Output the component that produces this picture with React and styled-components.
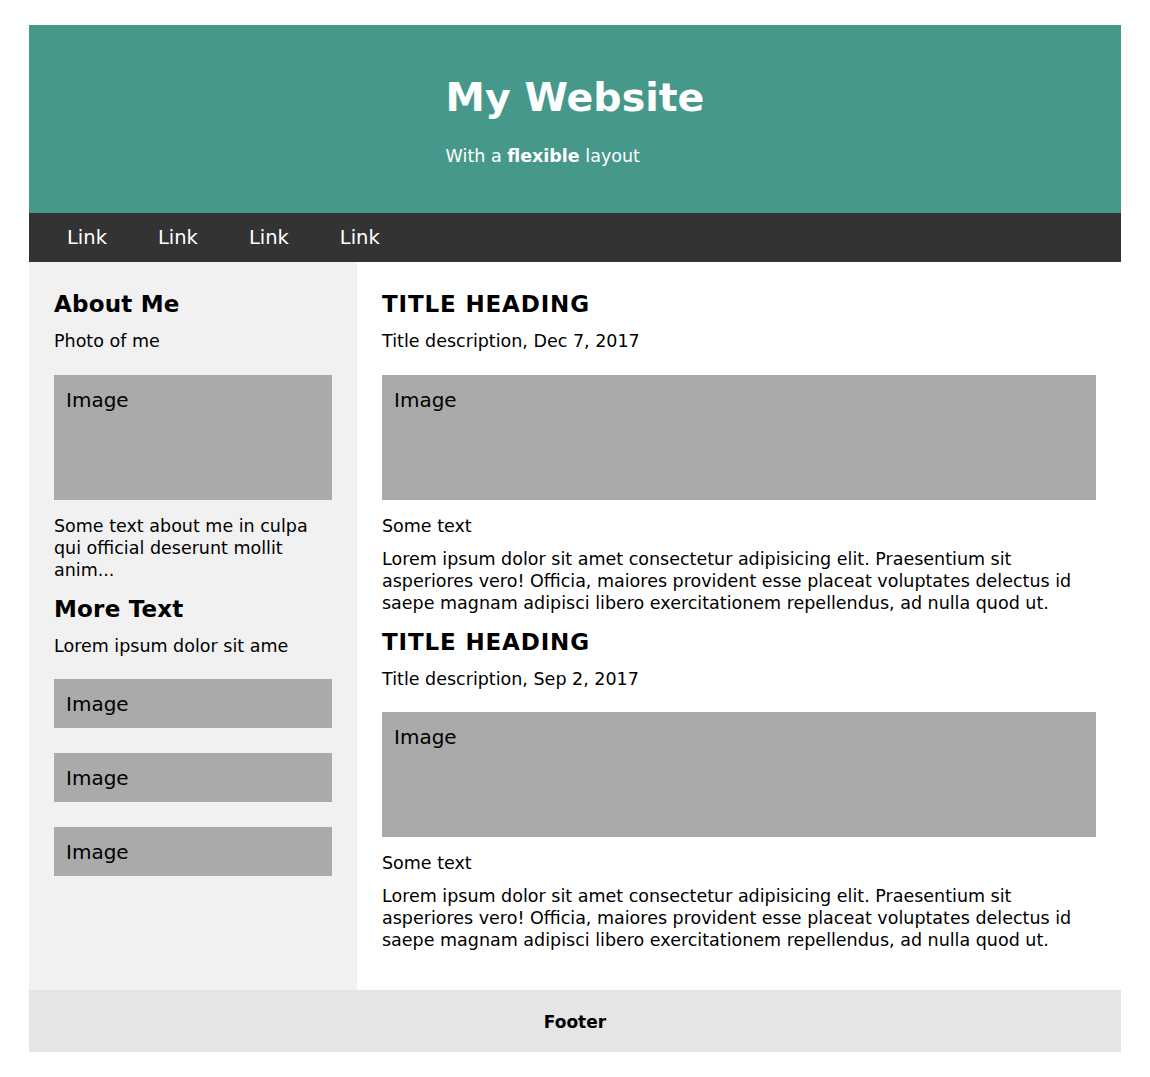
import React from "react";
import styled, { createGlobalStyle } from "styled-components";

const Global = createGlobalStyle`
  html, body { margin: 0; padding: 0; background: #fff; }
  body {
    font-family: "DejaVu Sans", Verdana, sans-serif;
    font-size: 17.5px;
    line-height: 22px;
    color: #000;
  }
`;

const Page = styled.div`
  width: 1092px;
  margin: 25px auto 26px;
`;

const Header = styled.header`
  background: #46998a;
  color: #fff;
  display: flex;
  justify-content: center;
  padding: 49px 20px 46px;
`;

const HeaderInner = styled.div`
  text-align: left;
`;

const Title = styled.h1`
  margin: 0 0 25px;
  font-size: 39.5px;
  font-weight: bold;
  line-height: normal;
`;

const Subtitle = styled.p`
  margin: 0;
`;

const Nav = styled.nav`
  background: #333;
  display: flex;
  padding: 0 12.5px;
`;

const NavLink = styled.a`
  color: #fff;
  text-decoration: none;
  font-size: 19.5px;
  line-height: 49px;
  padding: 0 25.5px;
`;

const Row = styled.div`
  display: flex;
`;

const Column = styled.section`
  box-sizing: border-box;
  padding: 14px 25px 28px;
  background: ${(p) => (p.$side ? "#f1f1f1" : "#fff")};
  flex: ${(p) => (p.$side ? "0 0 328px" : "1 1 auto")};
`;

const Heading = styled.h2`
  margin: 15px 0 13px;
  font-size: 23px;
  font-weight: bold;
  line-height: normal;
  letter-spacing: ${(p) => (p.$caps ? "0.85px" : "0.2px")};
`;

const Text = styled.p`
  margin: 11px 0;
`;

const FakeImg = styled.div`
  box-sizing: border-box;
  background: #aaa;
  margin: 22.5px 0 15px;
  padding: 13px 12px 11px;
  font-size: 20px;
  line-height: 25px;
  height: ${(p) => (p.$tall ? "125px" : "auto")};

  & + & {
    margin-top: 25px;
  }
`;

const Footer = styled.footer`
  background: #e5e5e5;
  text-align: center;
  font-weight: bold;
  font-size: 17px;
  line-height: 21px;
  padding: 22px 20px 19px;
`;

const lorem =
  "Lorem ipsum dolor sit amet consectetur adipisicing elit. Praesentium sit asperiores vero! Officia, maiores provident esse placeat voluptates delectus id saepe magnam adipisci libero exercitationem repellendus, ad nulla quod ut.";

const posts = [{ date: "Dec 7, 2017" }, { date: "Sep 2, 2017" }];

export default function App() {
  return (
    <>
      <Global />
      <Page>
        <Header>
          <HeaderInner>
            <Title>My Website</Title>
            <Subtitle>
              With a <b>flexible</b> layout
            </Subtitle>
          </HeaderInner>
        </Header>
        <Nav>
          <NavLink href="#">Link</NavLink>
          <NavLink href="#">Link</NavLink>
          <NavLink href="#">Link</NavLink>
          <NavLink href="#">Link</NavLink>
        </Nav>
        <Row>
          <Column $side>
            <Heading>About Me</Heading>
            <Text>Photo of me</Text>
            <FakeImg $tall>Image</FakeImg>
            <Text>Some text about me in culpa qui official deserunt mollit anim...</Text>
            <Heading>More Text</Heading>
            <Text>Lorem ipsum dolor sit ame</Text>
            <FakeImg>Image</FakeImg>
            <FakeImg>Image</FakeImg>
            <FakeImg>Image</FakeImg>
          </Column>
          <Column>
            {posts.map((p, i) => (
              <React.Fragment key={i}>
                <Heading $caps>TITLE HEADING</Heading>
                <Text>Title description, {p.date}</Text>
                <FakeImg $tall>Image</FakeImg>
                <Text>Some text</Text>
                <Text>{lorem}</Text>
              </React.Fragment>
            ))}
          </Column>
        </Row>
        <Footer>Footer</Footer>
      </Page>
    </>
  );
}
